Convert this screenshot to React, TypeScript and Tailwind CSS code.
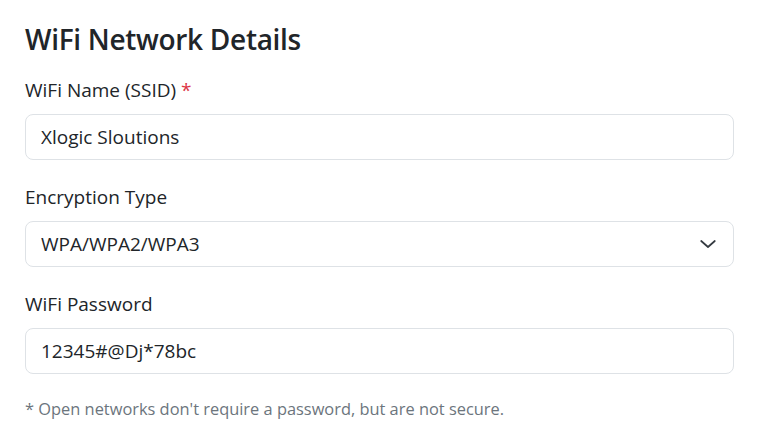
import { useState } from "react";

function Chevron() {
    return (
        <svg width="16" height="10" viewBox="0 0 16 10" className="pointer-events-none absolute right-[18px] top-1/2 -translate-y-1/2">
            <path d="M1.2 2 L8 8 L14.8 2" fill="none" stroke="#343a40" strokeWidth="1.7" strokeLinecap="round" strokeLinejoin="round" />
        </svg>
    );
}

export default function App() {
    const [ssid, setSsid] = useState("Xlogic Sloutions");
    const [enc, setEnc] = useState("WPA");
    const [pass, setPass] = useState("12345#@Dj*78bc");

    return (
        <div className="min-h-screen bg-white px-[25px] pt-[22px] text-[#212529] [font-family:'Open_Sans',sans-serif]">
            <h3 className="mb-[21px] text-[28px] font-semibold leading-[34px] tracking-[-0.3px]">WiFi Network Details</h3>

            <div className="mb-[24px]">
                <label className="mb-[10px] block text-[19px] leading-[27px]">
                    WiFi Name (SSID) <span className="text-[#dc3545]">*</span>
                </label>
                <input
                    value={ssid}
                    onChange={(e) => setSsid(e.target.value)}
                    className="block h-[46px] w-full rounded-lg border border-[#dee2e6] bg-white px-[15px] text-[19px] outline-none"
                />
            </div>

            <div className="mb-[24px]">
                <label className="mb-[10px] block text-[19px] leading-[27px]">Encryption Type</label>
                <div className="relative">
                    <select
                        value={enc}
                        onChange={(e) => setEnc(e.target.value)}
                        className="block h-[46px] w-full appearance-none rounded-lg border border-[#dee2e6] bg-white px-[15px] text-[19px] text-[#212529] outline-none"
                    >
                        <option value="WPA">WPA/WPA2/WPA3</option>
                        <option value="WEP">WEP</option>
                        <option value="nopass">None (Open Network)</option>
                    </select>
                    <Chevron />
                </div>
            </div>

            <div className="mb-[23px]">
                <label className="mb-[10px] block text-[19px] leading-[27px]">WiFi Password</label>
                <input
                    value={pass}
                    onChange={(e) => setPass(e.target.value)}
                    className="block h-[46px] w-full rounded-lg border border-[#dee2e6] bg-white px-[15px] text-[19px] outline-none"
                />
            </div>

            <p className="text-[16.4px] leading-[24px] text-[#6c757d]">
                * Open networks don't require a password, but are not secure.
            </p>
        </div>
    );
}
